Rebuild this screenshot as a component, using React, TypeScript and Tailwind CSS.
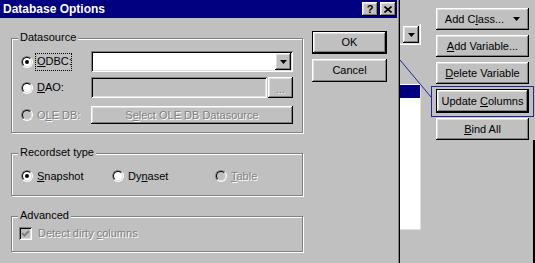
import React from 'react';

const raised =
  'shadow-[inset_-1px_-1px_0_#000,inset_1px_1px_0_#fff,inset_-2px_-2px_0_#808080,inset_2px_2px_0_#dfdfdf]';
const sunken =
  'shadow-[inset_1px_1px_0_#808080,inset_-1px_-1px_0_#fff,inset_2px_2px_0_#000,inset_-2px_-2px_0_#dfdfdf]';
const dim = 'text-[#808080] [text-shadow:1px_1px_0_#fff]';

const Arrow: React.FC = () => (
  <svg width="7" height="4" viewBox="0 0 7 4">
    <polygon points="0,0 7,0 3.5,4" fill="#000" />
  </svg>
);

const Radio: React.FC<{ checked?: boolean; disabled?: boolean }> = ({ checked, disabled }) => (
  <span className="w-[12px] h-[12px] shrink-0 rounded-full border border-t-[#808080] border-l-[#808080] border-b-white border-r-white flex">
    <span
      className={`flex-1 rounded-full border border-t-black border-l-black border-b-[#dfdfdf] border-r-[#dfdfdf] flex items-center justify-center ${
        disabled ? 'bg-[#c0c0c0]' : 'bg-white'
      }`}
    >
      {checked && <span className="w-[4px] h-[4px] rounded-full bg-black" />}
    </span>
  </span>
);

const Group: React.FC<{ label: string; className: string; children: React.ReactNode }> = ({
  label,
  className,
  children,
}) => (
  <div className={`relative border border-[#808080] shadow-[1px_1px_0_#fff,inset_1px_1px_0_#fff] ${className}`}>
    <span className="absolute -top-[8px] left-[6px] px-[2px] bg-[#c0c0c0] leading-[13px]">{label}</span>
    {children}
  </div>
);

const SideButton: React.FC<{ children: React.ReactNode }> = ({ children }) => (
  <div className={`h-[22px] bg-[#c0c0c0] flex items-center justify-center ${raised}`}>{children}</div>
);

const DatabaseOptions: React.FC = () => (
  <div className="w-[400px] shrink-0 flex flex-col border-r border-black shadow-[inset_-1px_0_0_#808080] pr-[2px]">
    {/* caption */}
    <div className="h-[18px] bg-[#000080] flex items-center pl-[3px] pr-[1px]">
      <span className="text-white font-bold text-[12px]">Database Options</span>
      <div
        className={`ml-auto w-[16px] h-[14px] bg-[#c0c0c0] flex items-center justify-center font-bold text-[11px] leading-none ${raised}`}
      >
        ?
      </div>
      <div className={`ml-[2px] w-[16px] h-[14px] bg-[#c0c0c0] flex items-center justify-center ${raised}`}>
        <svg width="8" height="7" viewBox="0 0 8 7">
          <path d="M0.5 0.5 L7.5 6.5 M7.5 0.5 L0.5 6.5" stroke="#000" strokeWidth="1.6" />
        </svg>
      </div>
    </div>

    <div className="flex">
      {/* groups */}
      <div className="ml-[11px] w-[292px] pt-[20px] flex flex-col">
        <Group label="Datasource" className="h-[95px] pt-[12px] flex flex-col">
          <div className="h-[21px] flex items-center pl-[9px]">
            <Radio checked />
            <span className="ml-[2px] w-[37px] h-[18px] px-[1px] flex items-center border border-dotted border-black">
              <span>
                <span className="underline">O</span>DBC:
              </span>
            </span>
            <div className={`ml-auto mr-[9px] w-[202px] h-[21px] bg-white flex items-center justify-end pr-[2px] ${sunken}`}>
              <div className={`w-[16px] h-[17px] bg-[#c0c0c0] flex items-center justify-center ${raised}`}>
                <Arrow />
              </div>
            </div>
          </div>
          <div className="mt-[5px] h-[21px] flex items-center pl-[9px]">
            <Radio />
            <span className="ml-[2px] w-[37px] px-[2px]">
              <span className="underline">D</span>AO:
            </span>
            <div className="ml-auto mr-[9px] w-[202px] h-[21px] flex">
              <div className={`w-[176px] ${sunken}`} />
              <div className={`ml-[1px] flex-1 flex items-end justify-center pb-[3px] leading-none ${raised} ${dim}`}>...</div>
            </div>
          </div>
          <div className="mt-[8px] h-[18px] flex items-center pl-[9px]">
            <Radio disabled />
            <span className={`ml-[2px] w-[50px] px-[2px] ${dim}`}>
              O<span className="underline">L</span>E DB:
            </span>
            <div className={`ml-auto mr-[9px] w-[202px] h-[18px] flex items-center justify-center ${raised} ${dim}`}>
              <span>
                S<span className="underline">e</span>lect OLE DB Datasource
              </span>
            </div>
          </div>
        </Group>

        <Group label="Recordset type" className="mt-[20px] h-[43px] pt-[15px]">
          <div className="h-[14px] flex items-center pl-[9px]">
            <div className="w-[91px] flex items-center">
              <Radio checked />
              <span className="ml-[4px]">
                <span className="underline">S</span>napshot
              </span>
            </div>
            <div className="w-[103px] flex items-center">
              <Radio />
              <span className="ml-[4px]">
                Dy<span className="underline">n</span>aset
              </span>
            </div>
            <div className="flex items-center">
              <Radio disabled />
              <span className={`ml-[4px] ${dim}`}>
                <span className="underline">T</span>able
              </span>
            </div>
          </div>
        </Group>

        <Group label="Advanced" className="mt-[20px] h-[36px] pt-[10px]">
          <div className="flex items-center pl-[7px]">
            <span className={`w-[13px] h-[13px] bg-[#c0c0c0] flex items-center justify-center ${sunken}`}>
              <svg width="9" height="9" viewBox="0 0 9 9">
                <polyline points="1,4 3.5,6.5 8,2" fill="none" stroke="#808080" strokeWidth="2" />
              </svg>
            </span>
            <span className={`ml-[6px] ${dim}`}>
              Detect dirty <span className="underline">c</span>olumns
            </span>
          </div>
        </Group>
      </div>

      {/* dialog buttons */}
      <div className="ml-[9px] w-[75px] pt-[13px] flex flex-col">
        <div className="h-[23px] border border-black flex">
          <div className={`flex-1 flex items-center justify-center ${raised}`}>OK</div>
        </div>
        <div className={`mt-[5px] h-[23px] flex items-center justify-center ${raised}`}>Cancel</div>
      </div>
    </div>
  </div>
);

const ClassWizardBehind: React.FC = () => (
  <div className="relative flex-1 flex">
    <div className="w-[21px] flex flex-col">
      <div className="mt-[24px] h-[21px] pt-[2px] pl-[3px] shadow-[inset_-1px_-1px_0_#fff,inset_-2px_-2px_0_#dfdfdf]">
        <div className={`w-[16px] h-[17px] flex items-center justify-center ${raised}`}>
          <Arrow />
        </div>
      </div>
      <div className="mt-[39px] h-[146px] bg-white border-r border-b border-[#dfdfdf] pt-[1px]">
        <div className="h-[13px] bg-[#000080]" />
      </div>
    </div>

    <div className="ml-[15px] w-[93px] pt-[8px] flex flex-col">
      <SideButton>
        <span>
          Add C<span className="underline">l</span>ass...
        </span>
        <span className="ml-[9px] mb-[1px] flex">
          <Arrow />
        </span>
      </SideButton>
      <div className="mt-[5px]">
        <SideButton>
          <span>
            <span className="underline">A</span>dd Variable...
          </span>
        </SideButton>
      </div>
      <div className="mt-[5px]">
        <SideButton>
          <span>
            <span className="underline">D</span>elete Variable
          </span>
        </SideButton>
      </div>
      <div className="mt-[5px] h-[24px] border border-black flex">
        <div className={`flex-1 flex items-center justify-center ${raised}`}>
          <span>
            Update <span className="underline">C</span>olumns
          </span>
        </div>
      </div>
      <div className="mt-[5px]">
        <SideButton>
          <span>
            <span className="underline">B</span>ind All
          </span>
        </SideButton>
      </div>
    </div>

    {/* annotation drawn over the window */}
    <svg className="absolute inset-0 pointer-events-none" width="135" height="263" viewBox="0 0 135 263">
      <line x1="0" y1="60" x2="31" y2="97" stroke="#1a2a9a" strokeWidth="1" />
      <rect x="31.5" y="86.5" width="102" height="30" fill="none" stroke="#1a2a9a" strokeWidth="1" />
      <line x1="134" y1="140" x2="134" y2="263" stroke="#000" strokeWidth="2" />
    </svg>
  </div>
);

export default function App() {
  return (
    <div className="w-[535px] h-[263px] overflow-hidden bg-[#c0c0c0] flex text-[11px] leading-[13px] text-black font-['Liberation_Sans',Arial,sans-serif]">
      <DatabaseOptions />
      <ClassWizardBehind />
    </div>
  );
}
